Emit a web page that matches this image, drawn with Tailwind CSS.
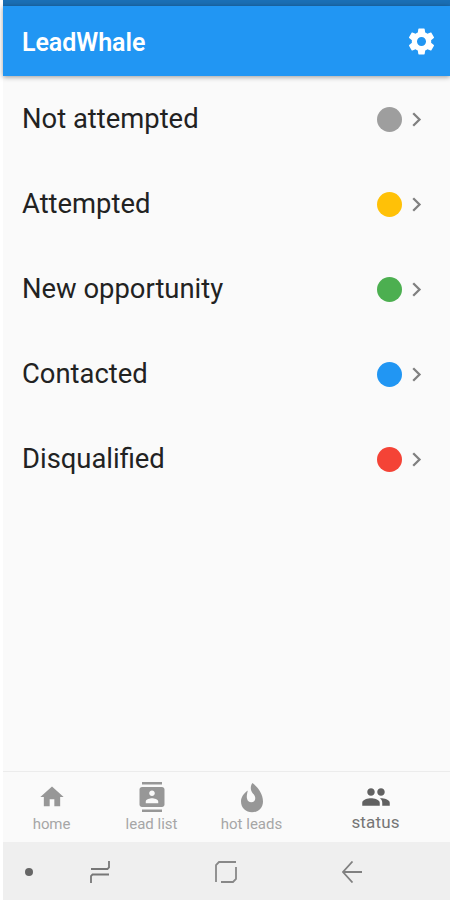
<!DOCTYPE html>
<html lang="en">
<head>
<meta charset="utf-8">
<title>LeadWhale</title>
<script src="https://cdn.jsdelivr.net/npm/@tailwindcss/browser@4"></script>
</head>
<body class="bg-white">
<div class="w-[450px] h-[900px] pl-[3px] overflow-hidden flex flex-col font-['Roboto',sans-serif]">
  <div class="h-[6px] shrink-0 bg-[#1a6fb5]"></div>
  <header class="relative h-[70px] shrink-0 bg-[#2196f3] shadow-[0_1px_5px_rgba(0,0,0,0.4)] flex items-center justify-between pl-[19px] pr-[13px]">
    <h1 class="text-white font-semibold text-[25px] tracking-[-0.05px] leading-none pt-[3px]">LeadWhale</h1>
    <svg class="size-[31px]" viewBox="0 0 24 24" fill="#fff"><path d="M19.43 12.98c.04-.32.07-.64.07-.98s-.03-.66-.07-.98l2.11-1.65c.19-.15.24-.42.12-.64l-2-3.46c-.12-.22-.39-.3-.61-.22l-2.49 1c-.52-.4-1.08-.73-1.69-.98l-.38-2.65C14.46 2.18 14.25 2 14 2h-4c-.25 0-.46.18-.49.42l-.38 2.65c-.61.25-1.17.59-1.69.98l-2.49-1c-.23-.09-.49 0-.61.22l-2 3.46c-.13.22-.07.49.12.64l2.11 1.65c-.04.32-.07.65-.07.98s.03.66.07.98l-2.11 1.65c-.19.15-.24.42-.12.64l2 3.46c.12.22.39.3.61.22l2.49-1c.52.4 1.08.73 1.69.98l.38 2.65c.03.24.24.42.49.42h4c.25 0 .46-.18.49-.42l.38-2.65c.61-.25 1.17-.59 1.69-.98l2.49 1c.23.09.49 0 .61-.22l2-3.46c.12-.22.07-.49-.12-.64l-2.11-1.65zM12 15.5c-1.93 0-3.5-1.57-3.5-3.5s1.57-3.5 3.5-3.5 3.5 1.57 3.5 3.5-1.57 3.5-3.5 3.5z"/></svg>
  </header>
  <main class="flex-1 pt-px bg-[#fafafa] text-[#222] text-[27.4px] leading-none">
    <div class="h-[85px] pl-[19px] pr-[28px] flex items-center"><span class="flex-1">Not attempted</span><i class="size-[25px] rounded-full bg-[#9e9e9e] mr-[10px] mb-px"></i><svg class="w-[10px] h-[15px] mb-px" viewBox="0 0 10 15" fill="none" stroke="#808080" stroke-width="2.3"><path d="M1.200 1.200l6.300 6.300-6.300 6.300"/></svg></div>
    <div class="h-[85px] pl-[19px] pr-[28px] flex items-center"><span class="flex-1">Attempted</span><i class="size-[25px] rounded-full bg-[#ffc107] mr-[10px] mb-px"></i><svg class="w-[10px] h-[15px] mb-px" viewBox="0 0 10 15" fill="none" stroke="#808080" stroke-width="2.3"><path d="M1.200 1.200l6.300 6.300-6.300 6.300"/></svg></div>
    <div class="h-[85px] pl-[19px] pr-[28px] flex items-center"><span class="flex-1">New opportunity</span><i class="size-[25px] rounded-full bg-[#4caf50] mr-[10px] mb-px"></i><svg class="w-[10px] h-[15px] mb-px" viewBox="0 0 10 15" fill="none" stroke="#808080" stroke-width="2.3"><path d="M1.200 1.200l6.300 6.300-6.300 6.300"/></svg></div>
    <div class="h-[85px] pl-[19px] pr-[28px] flex items-center"><span class="flex-1">Contacted</span><i class="size-[25px] rounded-full bg-[#2196f3] mr-[10px] mb-px"></i><svg class="w-[10px] h-[15px] mb-px" viewBox="0 0 10 15" fill="none" stroke="#808080" stroke-width="2.3"><path d="M1.200 1.200l6.300 6.300-6.300 6.300"/></svg></div>
    <div class="h-[85px] pl-[19px] pr-[28px] flex items-center"><span class="flex-1">Disqualified</span><i class="size-[25px] rounded-full bg-[#f44336] mr-[10px] mb-px"></i><svg class="w-[10px] h-[15px] mb-px" viewBox="0 0 10 15" fill="none" stroke="#808080" stroke-width="2.3"><path d="M1.200 1.200l6.300 6.300-6.300 6.300"/></svg></div>
  </main>
  <nav class="h-[71px] shrink-0 bg-[#fafafa] border-t border-[#ececec] flex text-[#a6a6a6] text-[15px] leading-none">
    <div class="w-[97px] flex flex-col items-center pt-[11px]"><svg class="size-[28px] mb-[6px]" viewBox="0 0 24 24" fill="#979797"><path d="M10 20v-6h4v6h5v-8h3L12 3 2 12h3v8z"/></svg><span class="tracking-[-0.1px]">home</span></div>
    <div class="w-[103px] flex flex-col items-center pt-[10px]"><svg class="size-[30px] mb-[5px]" viewBox="0 0 24 24" fill="#979797"><path d="M20 0H4v2h16V0zM4 24h16v-2H4v2zM20 4H4c-1.100 0-2 .9-2 2v12c0 1.100.9 2 2 2h16c1.100 0 2-.9 2-2V6c0-1.100-.9-2-2-2zm-8 2.750c1.240 0 2.250 1.010 2.250 2.250s-1.010 2.250-2.250 2.250S9.750 10.240 9.750 9 10.760 6.750 12 6.750zM17 17H7v-1.500c0-1.670 3.330-2.500 5-2.500s5 .83 5 2.500V17z"/></svg><span>lead list</span></div>
    <div class="w-[97px] flex flex-col items-center pt-[10px]"><svg class="w-[24px] h-[31px] mb-[4px]" viewBox="0 0 24 31" fill="#979797"><path d="M12.500 1C18 5.500 23 12 23 19.500 23 26 18 30.300 12 30.300S1 26 1 19.500C1 15 4 11 7.800 8.500 7 12 6.500 14.500 7 16.500c.5 2.500 2 3.800 4.300 3.800 2.500 0 4.200-2 3.900-4.800-.4-3.500-4.200-4.500-4.400-9-.1-2 .5-4 1.700-5.500z"/></svg><span>hot leads</span></div>
    <div class="flex-1 flex flex-col items-center pt-[10px] pl-px text-[17px] text-[#757575]"><svg class="size-[30px] mb-[2px]" viewBox="0 0 24 24" fill="#616161"><path d="M16 11c1.660 0 2.990-1.340 2.990-3S17.660 5 16 5c-1.660 0-3 1.340-3 3s1.340 3 3 3zm-8 0c1.660 0 2.990-1.340 2.990-3S9.660 5 8 5C6.340 5 5 6.340 5 8s1.340 3 3 3zm0 2c-2.330 0-7 1.170-7 3.500V19h14v-2.500c0-2.330-4.670-3.500-7-3.500zm8 0c-.29 0-.62.020-.97.050 1.160.84 1.970 1.970 1.970 3.450V19h6v-2.500c0-2.330-4.670-3.500-7-3.500z"/></svg><span class="tracking-[0.15px]">status</span></div>
  </nav>
  <footer class="h-[58px] shrink-0 bg-[#efefef] flex items-center pl-[22px] pt-[2px]">
    <i class="size-[8px] rounded-full bg-[#666]"></i>
    <svg class="w-[20px] h-[22px] ml-[57px]" viewBox="0 0 20 22" fill="none" stroke="#777" stroke-width="1.800"><path d="M1 8h16.500l1.500-1.500V0M1 22v-7l1.500-1.500H19"/></svg>
    <svg class="size-[22px] ml-[105px]" viewBox="0 0 22 22" fill="none" stroke="#888" stroke-width="1.800"><path d="M1 21V4L4 1H21M21 6v12L18 21H6"/></svg>
    <svg class="w-[20px] h-[22px] ml-[105px]" viewBox="0 0 20 22" fill="none" stroke="#808080" stroke-width="1.800"><path d="M10.500 .5L1 11l9.500 10.500M1 11h19"/></svg>
  </footer>
</div>
</body>
</html>
